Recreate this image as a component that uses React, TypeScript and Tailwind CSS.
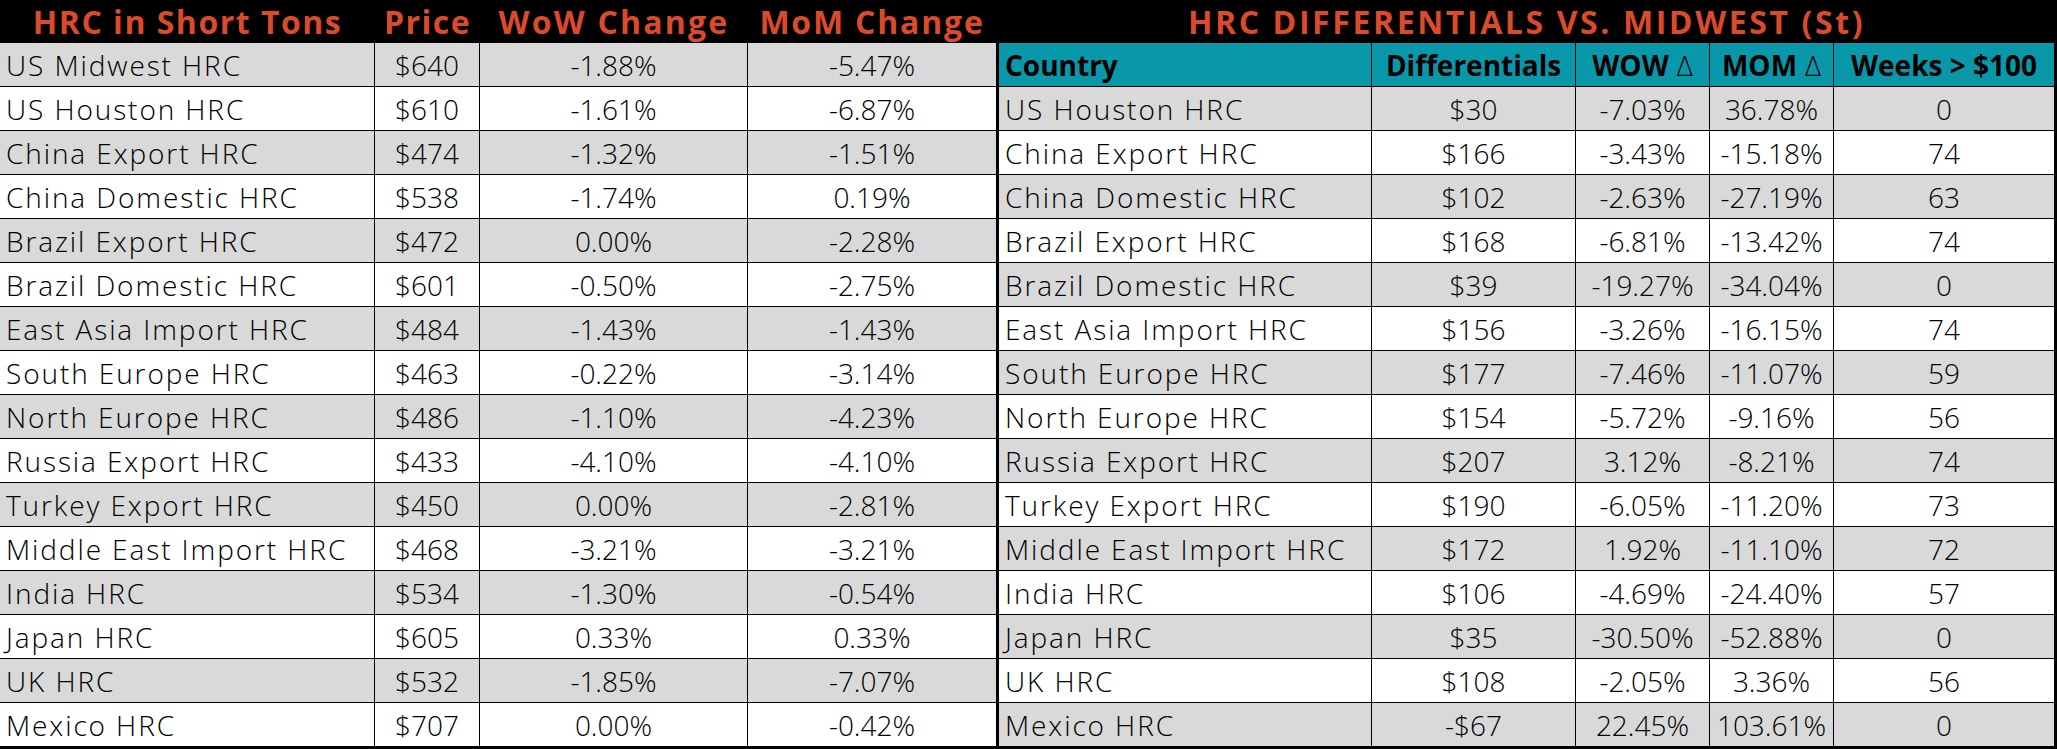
import React from 'react'

const LEFT_ROWS: [string, string, string, string][] = [
  ['US Midwest HRC', '$640', '-1.88%', '-5.47%'],
  ['US Houston HRC', '$610', '-1.61%', '-6.87%'],
  ['China Export HRC', '$474', '-1.32%', '-1.51%'],
  ['China Domestic HRC', '$538', '-1.74%', '0.19%'],
  ['Brazil Export HRC', '$472', '0.00%', '-2.28%'],
  ['Brazil Domestic HRC', '$601', '-0.50%', '-2.75%'],
  ['East Asia Import HRC', '$484', '-1.43%', '-1.43%'],
  ['South Europe HRC', '$463', '-0.22%', '-3.14%'],
  ['North Europe HRC', '$486', '-1.10%', '-4.23%'],
  ['Russia Export HRC', '$433', '-4.10%', '-4.10%'],
  ['Turkey Export HRC', '$450', '0.00%', '-2.81%'],
  ['Middle East Import HRC', '$468', '-3.21%', '-3.21%'],
  ['India HRC', '$534', '-1.30%', '-0.54%'],
  ['Japan HRC', '$605', '0.33%', '0.33%'],
  ['UK HRC', '$532', '-1.85%', '-7.07%'],
  ['Mexico HRC', '$707', '0.00%', '-0.42%'],
]

const RIGHT_ROWS: [string, string, string, string, string][] = [
  ['US Houston HRC', '$30', '-7.03%', '36.78%', '0'],
  ['China Export HRC', '$166', '-3.43%', '-15.18%', '74'],
  ['China Domestic HRC', '$102', '-2.63%', '-27.19%', '63'],
  ['Brazil Export HRC', '$168', '-6.81%', '-13.42%', '74'],
  ['Brazil Domestic HRC', '$39', '-19.27%', '-34.04%', '0'],
  ['East Asia Import HRC', '$156', '-3.26%', '-16.15%', '74'],
  ['South Europe HRC', '$177', '-7.46%', '-11.07%', '59'],
  ['North Europe HRC', '$154', '-5.72%', '-9.16%', '56'],
  ['Russia Export HRC', '$207', '3.12%', '-8.21%', '74'],
  ['Turkey Export HRC', '$190', '-6.05%', '-11.20%', '73'],
  ['Middle East Import HRC', '$172', '1.92%', '-11.10%', '72'],
  ['India HRC', '$106', '-4.69%', '-24.40%', '57'],
  ['Japan HRC', '$35', '-30.50%', '-52.88%', '0'],
  ['UK HRC', '$108', '-2.05%', '3.36%', '56'],
  ['Mexico HRC', '-$67', '22.45%', '103.61%', '0'],
]

const LEFT_COLS = 'grid grid-cols-[375px_105px_268px_248px]'
const RIGHT_COLS = 'grid grid-cols-[373px_204px_134px_124px_220px]'

function rowClass(last: boolean, grey: boolean) {
  return `${last ? 'h-[46px] border-b-[3px]' : 'h-[44px] border-b'} border-black font-light ${grey ? 'bg-[#d9d9d9]' : 'bg-white'}`
}

function LeftTable() {
  return (
    <div className="w-[999px] flex flex-col border-r-[3px] border-black">
      <div className={`${LEFT_COLS} h-[43px] items-center bg-black text-[#db4a2b] text-[32px] font-bold tracking-[1.5px] leading-none`}>
        <div className="text-center">HRC in Short Tons</div>
        <div className="text-center">Price</div>
        <div className="text-center tracking-[2.2px]">WoW Change</div>
        <div className="text-center tracking-[1.8px]">MoM Change</div>
      </div>
      {LEFT_ROWS.map((r, i) => (
        <div key={r[0]} className={`${LEFT_COLS} ${rowClass(i === LEFT_ROWS.length - 1, i % 2 === 0)}`}>
          <div className="flex items-center pl-[6px] border-r border-black tracking-[1.9px]">{r[0]}</div>
          <div className="flex items-center justify-center border-r border-black">{r[1]}</div>
          <div className="flex items-center justify-center border-r border-black">{r[2]}</div>
          <div className="flex items-center justify-center">{r[3]}</div>
        </div>
      ))}
    </div>
  )
}

function RightTable() {
  return (
    <div className="w-[1058px] flex flex-col border-r-[3px] border-black">
      <div className="h-[43px] flex items-center justify-center bg-black text-[#db4a2b] text-[32px] font-bold tracking-[2.6px] leading-none">
        HRC DIFFERENTIALS VS. MIDWEST (St)
      </div>
      <div className={`${RIGHT_COLS} h-[44px] border-b border-black bg-[#0898aa] font-bold`}>
        <div className="flex items-center pl-[6px] border-r border-black">Country</div>
        <div className="flex items-center justify-center border-r border-black">Differentials</div>
        <div className="flex items-center justify-center border-r border-black">
          WOW <span className="font-light ml-[8px]">Δ</span>
        </div>
        <div className="flex items-center justify-center border-r border-black">
          MOM <span className="font-light ml-[8px]">Δ</span>
        </div>
        <div className="flex items-center justify-center">Weeks &gt; $100</div>
      </div>
      {RIGHT_ROWS.map((r, i) => (
        <div key={r[0]} className={`${RIGHT_COLS} ${rowClass(i === RIGHT_ROWS.length - 1, i % 2 === 0)}`}>
          <div className="flex items-center pl-[6px] border-r border-black tracking-[1.9px]">{r[0]}</div>
          <div className="flex items-center justify-center border-r border-black">{r[1]}</div>
          <div className="flex items-center justify-center border-r border-black">{r[2]}</div>
          <div className="flex items-center justify-center border-r border-black">{r[3]}</div>
          <div className="flex items-center justify-center">{r[4]}</div>
        </div>
      ))}
    </div>
  )
}

export default function App() {
  return (
    <div className="w-[2057px] h-[749px] overflow-hidden flex bg-black text-black text-[28px] leading-none font-['Open_Sans',sans-serif]">
      <LeftTable />
      <RightTable />
    </div>
  )
}
